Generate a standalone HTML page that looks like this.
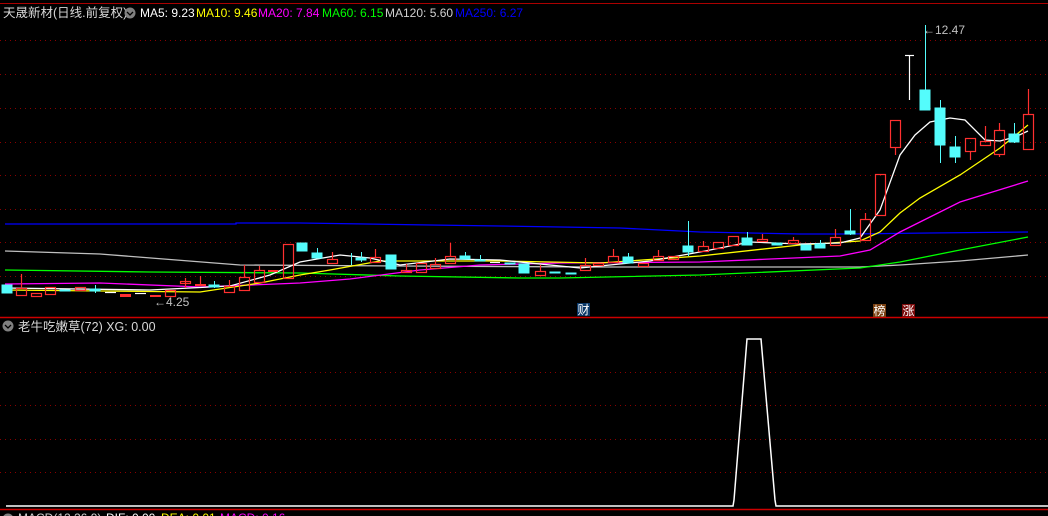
<!DOCTYPE html>
<html><head><meta charset="utf-8"><style>
html,body{margin:0;padding:0;background:#000;width:1048px;height:516px;overflow:hidden}
svg{display:block}
text{font-family:"Liberation Sans","Noto Sans CJK SC",sans-serif}
</style></head><body>
<svg width="1048" height="516" viewBox="0 0 1048 516" xmlns="http://www.w3.org/2000/svg">
<rect width="1048" height="516" fill="#000"/>
<line x1="0" y1="3.5" x2="1048" y2="3.5" stroke="#a00" stroke-width="1"/>
<g stroke="#8a0000" stroke-width="1" stroke-dasharray="1,4">
<line x1="0" y1="40.5" x2="1048" y2="40.5"/>
<line x1="0" y1="74.5" x2="1048" y2="74.5"/>
<line x1="0" y1="108.5" x2="1048" y2="108.5"/>
<line x1="0" y1="142.5" x2="1048" y2="142.5"/>
<line x1="0" y1="175.5" x2="1048" y2="175.5"/>
<line x1="0" y1="209.5" x2="1048" y2="209.5"/>
<line x1="0" y1="242.5" x2="1048" y2="242.5"/>
<line x1="0" y1="276.5" x2="1048" y2="276.5"/>
<line x1="0" y1="372.5" x2="1048" y2="372.5"/>
<line x1="0" y1="405.5" x2="1048" y2="405.5"/>
<line x1="0" y1="439.5" x2="1048" y2="439.5"/>
<line x1="0" y1="472.5" x2="1048" y2="472.5"/>
</g>
<line x1="0" y1="317.5" x2="1048" y2="317.5" stroke="#c00" stroke-width="1.5"/>
<line x1="0" y1="509.5" x2="1048" y2="509.5" stroke="#c00" stroke-width="1.5"/>

<g fill="none" stroke-width="1.3">
<polyline stroke="#0000ff" points="5,224 236,224 236,223 300,223 430,225 500,226 620,228 700,232 800,234 850,234 930,233 1028,232"/>
<polyline stroke="#c0c0c0" points="5,251 100,254 240,265 400,266 600,267 860,267 900,265 960,261 1028,255"/>
<polyline stroke="#00ff00" points="5,270 150,272 300,273 400,276 520,278 560,278 700,275 860,268 900,262 960,250 1028,237"/>
<polyline stroke="#ff00ff" points="5,284 100,283 200,287 300,283 350,279 420,270 480,265 560,263 700,262 840,256 870,250 900,232 960,202 1028,181"/>
<polyline stroke="#ffff00" points="5,290 100,291 200,292 260,283 300,275 330,270 380,261 500,261 600,263 700,256 800,245 860,241 880,232 900,213 920,198 960,175 1000,148 1028,125"/>
<polyline stroke="#ffffff" points="5,288 150,290 230,286 270,275 300,262 340,255 370,258 400,265 450,259 500,260 580,268 650,261 700,252 750,242 800,244 840,243 860,238 880,210 900,155 915,135 930,122 950,118 965,120 985,140 1000,141 1015,137 1028,131"/>
</g>

<g fill="none" stroke="#ff3030" stroke-width="1.2">
<line x1="21.5" y1="274" x2="21.5" y2="288"/><rect x="16.5" y="288.5" width="10" height="7"/>
<rect x="31.5" y="293.5" width="10" height="3"/>
<rect x="45.5" y="287.5" width="10" height="7"/>
<rect x="75.5" y="287.5" width="10" height="3"/>
<rect x="165.5" y="290.5" width="10" height="6"/>
<line x1="185.5" y1="278" x2="185.5" y2="288"/><rect x="180.5" y="281.5" width="10" height="2"/>
<line x1="200.5" y1="276" x2="200.5" y2="286"/>
<line x1="229.5" y1="280" x2="229.5" y2="286"/><rect x="224.5" y="286.5" width="10" height="6"/>
<line x1="244.5" y1="265" x2="244.5" y2="277"/><rect x="239.5" y="277.5" width="10" height="13"/>
<line x1="259.5" y1="266" x2="259.5" y2="270"/><rect x="254.5" y="270.5" width="10" height="12"/>
<rect x="283.5" y="244.5" width="10" height="34"/>
<line x1="332.5" y1="252" x2="332.5" y2="259"/><rect x="327.5" y="259.5" width="10" height="4"/>
<line x1="375.5" y1="249" x2="375.5" y2="257"/><rect x="370.5" y="257.5" width="10" height="5"/>
<line x1="406.5" y1="264" x2="406.5" y2="270"/><rect x="401.5" y="270.5" width="10" height="2"/>
<rect x="416.5" y="263.5" width="10" height="9"/>
<line x1="435.5" y1="258" x2="435.5" y2="264"/><rect x="430.5" y="264.5" width="10" height="4"/>
<line x1="450.5" y1="243" x2="450.5" y2="256"/><rect x="445.5" y="256.5" width="10" height="7"/>
<line x1="540.5" y1="265" x2="540.5" y2="271"/><rect x="535.5" y="271.5" width="10" height="4"/>
<line x1="585.5" y1="258" x2="585.5" y2="265"/><rect x="580.5" y="265.5" width="10" height="5"/>
<rect x="593.5" y="263.5" width="10" height="2"/>
<line x1="613.5" y1="249" x2="613.5" y2="256"/><rect x="608.5" y="256.5" width="10" height="6"/>
<rect x="638.5" y="263.5" width="10" height="3"/>
<line x1="658.5" y1="250" x2="658.5" y2="256"/><rect x="653.5" y="256.5" width="10" height="4"/>
<rect x="668.5" y="256.5" width="10" height="3"/>
<line x1="703.5" y1="241" x2="703.5" y2="246"/><rect x="698.5" y="246.5" width="10" height="5"/>
<rect x="713.5" y="242.5" width="10" height="6"/>
<rect x="728.5" y="236.5" width="10" height="9"/>
<line x1="762.5" y1="234" x2="762.5" y2="239"/><rect x="757.5" y="239.5" width="10" height="2"/>
<line x1="793.5" y1="237" x2="793.5" y2="240"/><rect x="788.5" y="240.5" width="10" height="3"/>
<line x1="835.5" y1="229" x2="835.5" y2="237"/><rect x="830.5" y="237.5" width="10" height="8"/>
<line x1="865.5" y1="213" x2="865.5" y2="219"/><rect x="860.5" y="219.5" width="10" height="21"/>
<rect x="875.5" y="174.5" width="10" height="41"/>
<line x1="895.5" y1="147" x2="895.5" y2="155"/><rect x="890.5" y="120.5" width="10" height="27"/>
<line x1="970.5" y1="151" x2="970.5" y2="160"/><rect x="965.5" y="138.5" width="10" height="13"/>
<line x1="985.5" y1="126" x2="985.5" y2="141"/><rect x="980.5" y="141.5" width="10" height="4"/>
<line x1="999.5" y1="123" x2="999.5" y2="130"/><line x1="999.5" y1="154" x2="999.5" y2="157"/><rect x="994.5" y="130.5" width="10" height="24"/>
<line x1="1028.5" y1="89" x2="1028.5" y2="114"/><rect x="1023.5" y="114.5" width="10" height="35"/>
</g>
<g fill="#ff3030">
<rect x="120" y="294" width="11" height="3"/>
<rect x="150" y="295" width="11" height="2"/>
<rect x="195" y="284" width="11" height="2"/>
<rect x="268" y="270" width="10" height="2"/>
</g>
<g fill="#54fcfc" stroke="#54fcfc" stroke-width="1">
<rect x="2" y="285" width="10" height="8"/>
<rect x="60" y="290" width="10" height="1"/>
<line x1="95.5" y1="285" x2="95.5" y2="293" fill="none"/><rect x="90" y="289" width="10" height="2"/>
<line x1="214.5" y1="281" x2="214.5" y2="288" fill="none"/><rect x="209" y="285" width="10" height="2"/>
<rect x="297" y="243" width="10" height="8"/>
<line x1="317.5" y1="248" x2="317.5" y2="258" fill="none"/><rect x="312" y="253" width="10" height="5"/>
<line x1="351.5" y1="253" x2="351.5" y2="265" fill="none"/>
<line x1="361.5" y1="252" x2="361.5" y2="262" fill="none"/><rect x="356" y="258" width="10" height="2"/>
<rect x="386" y="255" width="10" height="14"/>
<line x1="465.5" y1="252" x2="465.5" y2="259" fill="none"/><rect x="460" y="256" width="10" height="3"/>
<line x1="480.5" y1="255" x2="480.5" y2="261" fill="none"/><rect x="475" y="260" width="10" height="1"/>
<rect x="505" y="263" width="10" height="1"/>
<rect x="519" y="264" width="10" height="9"/>
<rect x="550" y="272" width="10" height="1"/>
<rect x="566" y="273" width="10" height="1"/>
<line x1="628.5" y1="253" x2="628.5" y2="263" fill="none"/><rect x="623" y="257" width="10" height="6"/>
<line x1="688.5" y1="221" x2="688.5" y2="256" fill="none"/><rect x="683" y="246" width="10" height="6"/>
<line x1="747.5" y1="232" x2="747.5" y2="245" fill="none"/><rect x="742" y="238" width="10" height="7"/>
<rect x="772" y="243" width="10" height="2"/>
<rect x="801" y="245" width="10" height="5"/>
<line x1="820.5" y1="240" x2="820.5" y2="248" fill="none"/><rect x="815" y="244" width="10" height="4"/>
<line x1="850.5" y1="209" x2="850.5" y2="235" fill="none"/><rect x="845" y="231" width="10" height="3"/>
<line x1="925.5" y1="25" x2="925.5" y2="110" fill="none"/><rect x="920" y="90" width="10" height="20"/>
<line x1="940.5" y1="100" x2="940.5" y2="163" fill="none"/><rect x="935" y="108" width="10" height="37"/>
<line x1="955.5" y1="136" x2="955.5" y2="163" fill="none"/><rect x="950" y="147" width="10" height="10"/>
<line x1="1014.5" y1="123" x2="1014.5" y2="143" fill="none"/><rect x="1009" y="134" width="10" height="8"/>
</g>
<g stroke="#fff" stroke-width="1.2" fill="none">
<line x1="105" y1="292.5" x2="116" y2="292.5"/>
<line x1="135" y1="293.5" x2="146" y2="293.5"/>
<line x1="490" y1="262.5" x2="500" y2="262.5"/>
<line x1="909.5" y1="55" x2="909.5" y2="100"/>
<line x1="905" y1="55.5" x2="914" y2="55.5"/>
</g>

<text x="154" y="306" font-size="12" fill="#c0c0c0">←4.25</text>
<text x="923" y="34" font-size="12" fill="#c0c0c0">←12.47</text>

<rect x="577" y="303" width="13" height="13" fill="#0a3868"/>
<text x="577.5" y="314" font-size="12" fill="#fff">财</text>
<rect x="873" y="304" width="13" height="13" fill="#7a4010"/>
<text x="873.5" y="315" font-size="12" fill="#fff">榜</text>
<rect x="902" y="304" width="13" height="13" fill="#7a0a0a"/>
<text x="902.5" y="315" font-size="12" fill="#fff">涨</text>

<text x="3" y="17" font-size="12.5" fill="#d8d8d8">天晟新材(日线.前复权)</text>
<circle cx="130" cy="13" r="5.5" fill="#808080"/>
<path d="M127 12 L130 15 L133 12" stroke="#000" stroke-width="1.3" fill="none"/>
<text x="140" y="17" font-size="12" fill="#fff">MA5: 9.23</text>
<text x="196" y="17" font-size="12" fill="#ffff00">MA10: 9.46</text>
<text x="258" y="17" font-size="12" fill="#ff00ff">MA20: 7.84</text>
<text x="322" y="17" font-size="12" fill="#00ff00">MA60: 6.15</text>
<text x="385" y="17" font-size="12" fill="#d0d0d0">MA120: 5.60</text>
<text x="455" y="17" font-size="12" fill="#0000ff">MA250: 6.27</text>

<circle cx="8" cy="326" r="5.5" fill="#808080"/>
<path d="M5 325 L8 328 L11 325" stroke="#000" stroke-width="1.3" fill="none"/>
<text x="18" y="331" font-size="12.5" fill="#d8d8d8">老牛吃嫩草(72)  XG: 0.00</text>
<polyline fill="none" stroke="#fff" stroke-width="1.5" points="6,506 733,506 734,500 747,339 761,339 775,500 776,506 1048,506"/>

<circle cx="8" cy="519" r="5.5" fill="#808080"/>
<text x="18" y="522" font-size="12" fill="#d0d0d0">MACD(12,26,9)</text>
<text x="106" y="522" font-size="12" fill="#fff">DIF: 0.00</text>
<text x="161" y="522" font-size="12" fill="#ffff00">DEA: 0.01</text>
<text x="220" y="522" font-size="12" fill="#ff00ff">MACD: 0.16</text>
</svg>
</body></html>
